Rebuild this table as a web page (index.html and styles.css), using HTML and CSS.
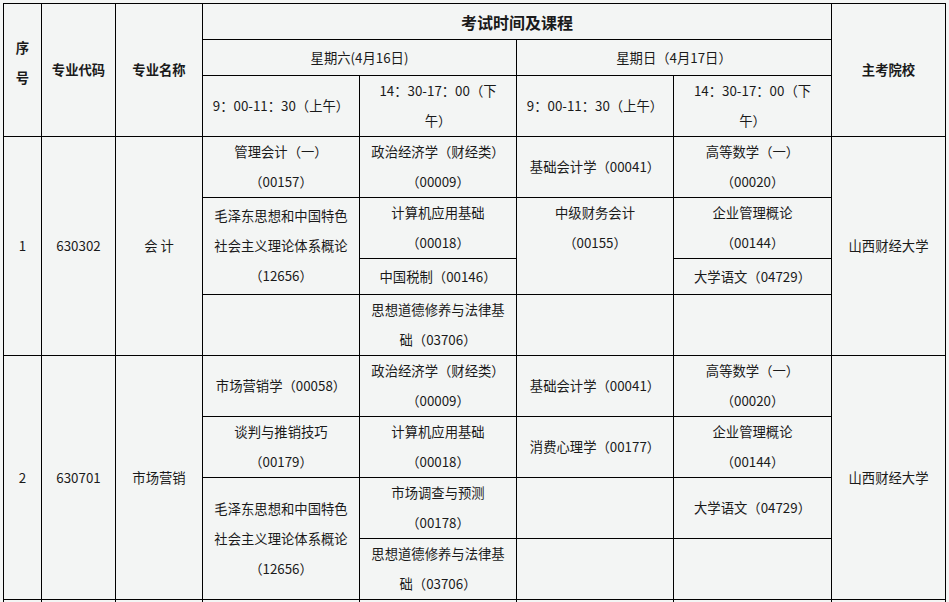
FILE: index.html
```html
<!DOCTYPE html>
<html lang="zh-CN">
<head>
<meta charset="utf-8">
<title>考试时间及课程</title>
<link rel="stylesheet" href="styles.css">
</head>
<body>
<table class="sched">
  <colgroup>
    <col class="c-no">
    <col class="c-code">
    <col class="c-name">
    <col class="c-slot">
    <col class="c-slot">
    <col class="c-slot">
    <col class="c-slot2">
    <col class="c-school">
  </colgroup>
  <tbody>
    <tr class="h36">
      <td rowspan="3" class="th th-no">序号</td>
      <td rowspan="3" class="th">专业代码</td>
      <td rowspan="3" class="th">专业名称</td>
      <td colspan="4" class="th th-big">考试时间及课程</td>
      <td rowspan="3" class="th">主考院校</td>
    </tr>
    <tr class="h36">
      <td colspan="2">星期六(4月16日)</td>
      <td colspan="2">星期日（4月17日）</td>
    </tr>
    <tr class="h61">
      <td>9：00-11：30（上午）</td>
      <td>14：30-17：00（下午）</td>
      <td>9：00-11：30（上午）</td>
      <td>14：30-17：00（下午）</td>
    </tr>

    <tr class="h61">
      <td rowspan="4">1</td>
      <td rowspan="4">630302</td>
      <td rowspan="4">会 计</td>
      <td>管理会计（一）<br>（00157）</td>
      <td>政治经济学（财经类）<br>（00009）</td>
      <td>基础会计学（00041）</td>
      <td>高等数学（一）<br>（00020）</td>
      <td rowspan="4">山西财经大学</td>
    </tr>
    <tr class="h61">
      <td rowspan="2">毛泽东思想和中国特色社会主义理论体系概论（12656）</td>
      <td>计算机应用基础<br>（00018）</td>
      <td rowspan="2" class="top">中级财务会计<br>（00155）</td>
      <td>企业管理概论<br>（00144）</td>
    </tr>
    <tr class="h36">
      <td>中国税制（00146）</td>
      <td>大学语文（04729）</td>
    </tr>
    <tr class="h61">
      <td></td>
      <td>思想道德修养与法律基础（03706）</td>
      <td></td>
      <td></td>
    </tr>

    <tr class="h61">
      <td rowspan="4">2</td>
      <td rowspan="4">630701</td>
      <td rowspan="4">市场营销</td>
      <td>市场营销学（00058）</td>
      <td>政治经济学（财经类）<br>（00009）</td>
      <td>基础会计学（00041）</td>
      <td>高等数学（一）<br>（00020）</td>
      <td rowspan="4">山西财经大学</td>
    </tr>
    <tr class="h61">
      <td>谈判与推销技巧<br>（00179）</td>
      <td>计算机应用基础<br>（00018）</td>
      <td>消费心理学（00177）</td>
      <td>企业管理概论<br>（00144）</td>
    </tr>
    <tr class="h61">
      <td rowspan="2">毛泽东思想和中国特色社会主义理论体系概论（12656）</td>
      <td>市场调查与预测<br>（00178）</td>
      <td></td>
      <td>大学语文（04729）</td>
    </tr>
    <tr class="h61">
      <td>思想道德修养与法律基础（03706）</td>
      <td></td>
      <td></td>
    </tr>

    <tr class="h61">
      <td></td><td></td><td></td><td></td><td></td><td></td><td></td><td></td>
    </tr>
  </tbody>
</table>
</body>
</html>
```
FILE: styles.css
```css
html, body {
  margin: 0;
  padding: 0;
  background: #f3f5f4;
  overflow: hidden;
  height: 602px;
}

body {
  font-family: "Noto Sans CJK SC", "Microsoft YaHei", sans-serif;
  font-size: 13.33px;
  color: #1a1a1a;
  text-spacing-trim: space-all;
}

.sched {
  margin: 3px 0 0 3px;
  border-collapse: collapse;
  table-layout: fixed;
  width: 942px;
}

.c-no { width: 38px; }
.c-code { width: 74px; }
.c-name { width: 87px; }
.c-slot { width: 157px; }
.c-slot2 { width: 158px; }
.c-school { width: 114px; }

.sched td {
  border: 1px solid #000;
  padding: 0 8px;
  line-height: 30px;
  text-align: center;
  vertical-align: middle;
  word-break: break-all;
  text-spacing-trim: space-all;
}

.sched td.top {
  vertical-align: top;
}

.h36 { height: 36px; }
.h61 { height: 61px; }

.th {
  font-weight: bold;
}

.th-big {
  font-size: 16px;
}

.sched td.th-no {
  padding: 0 8px 14px;
}
```
